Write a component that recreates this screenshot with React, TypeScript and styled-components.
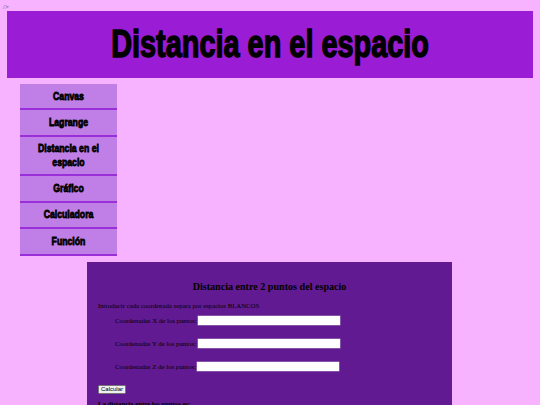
import styled, { createGlobalStyle } from "styled-components";

const Global = createGlobalStyle`
  html, body { margin: 0; padding: 0; overflow: hidden; }
  body {
    height: 405px;
    background: #f7b3ff;
    font-family: "Liberation Serif", "Times New Roman", serif;
    color: #000;
  }
`;

const Stray = styled.div`
  height: 11px;
  padding-left: 3px;
  font-size: 7px;
  line-height: 14px;
  color: #5a4a66;
`;

const Header = styled.header`
  margin: 0 7px;
  height: 67px;
  background: #9a1cd4;
  display: flex;
  align-items: center;
  justify-content: center;
`;

/* no Impact here, so squeeze the bold sans to get the same look */
const Title = styled.h1`
  margin: 0;
  white-space: nowrap;
  font-family: "Liberation Sans", Arial, sans-serif;
  font-size: 38px;
  font-weight: 700;
  -webkit-text-stroke: 1.4px #000;
  transform: scaleX(0.76);
`;

const Menu = styled.nav`
  width: 97px;
  margin: 6px 0 0 20px;
  display: flex;
  flex-direction: column;
`;

const MenuItem = styled.a`
  display: block;
  background: #bf7fe6;
  border-bottom: 2px solid #9a2ed9;
  padding: 5.6px 8px;
  text-align: center;
`;

const MenuLabel = styled.span`
  display: block;
  font-family: "Liberation Sans", Arial, sans-serif;
  font-size: 11px;
  line-height: 13.2px;
  font-weight: 700;
  -webkit-text-stroke: 0.8px #000;
  transform: scaleX(0.79);
`;

const Panel = styled.section`
  width: 343px;
  margin: 6px 0 0 87px;
  padding: 19px 11px 0;
  height: 143px;
  background: #611a91;
`;

const PanelTitle = styled.h2`
  margin: 0 0 9px;
  text-align: center;
  font-size: 10.1px;
  line-height: 12px;
  font-weight: 700;
`;

const Hint = styled.p`
  margin: 0 0 1px;
  font-size: 6.75px;
  line-height: 8px;
`;

const Fields = styled.div`
  display: flex;
  flex-direction: column;
  gap: 14.3px;
  margin-top: 6px;
`;

const Field = styled.div`
  display: flex;
  align-items: center;
  gap: 1.5px;
  height: 9px;
  padding-left: 17px;
  font-size: 6.8px;
`;

const FieldInput = styled.input`
  width: 142px;
  height: 9px;
  padding: 0;
  border: 0;
  background: #fff;
  box-shadow: 0 0 0 0.5px #a98cc4;
`;

const Submit = styled.button`
  display: block;
  margin-top: 14px;
  width: 28px;
  height: 9px;
  padding: 0;
  font-family: "Liberation Sans", Arial, sans-serif;
  font-size: 6px;
  line-height: 7px;
  color: #000;
  background: #efefef;
  border: 0.5px solid #767676;
  border-radius: 1.5px;
`;

const Result = styled.p`
  margin: 6px 0 0;
  font-size: 6.75px;
  line-height: 8px;
  font-weight: 700;
`;

const links = ["Canvas", "Lagrange", "Distancia en el espacio", "Gráfico", "Calculadora", "Función"];
const fields = ["Coordenadas X de los puntos:", "Coordenadas Y de los puntos:", "Coordenadas Z de los puntos:"];

export default function App() {
  return (
    <>
      <Global />
      <Stray>/&gt;</Stray>
      <Header>
        <Title>Distancia en el espacio</Title>
      </Header>
      <Menu>
        {links.map((link) => (
          <MenuItem key={link}>
            <MenuLabel>{link}</MenuLabel>
          </MenuItem>
        ))}
      </Menu>
      <Panel>
        <PanelTitle>Distancia entre 2 puntos del espacio</PanelTitle>
        <Hint>Introducir cada coordenada separa por espacios BLANCOS</Hint>
        <Fields>
          {fields.map((field) => (
            <Field key={field}>
              {field}
              <FieldInput />
            </Field>
          ))}
        </Fields>
        <Submit>Calcular</Submit>
        <Result>La distancia entre los puntos es:</Result>
      </Panel>
    </>
  );
}
